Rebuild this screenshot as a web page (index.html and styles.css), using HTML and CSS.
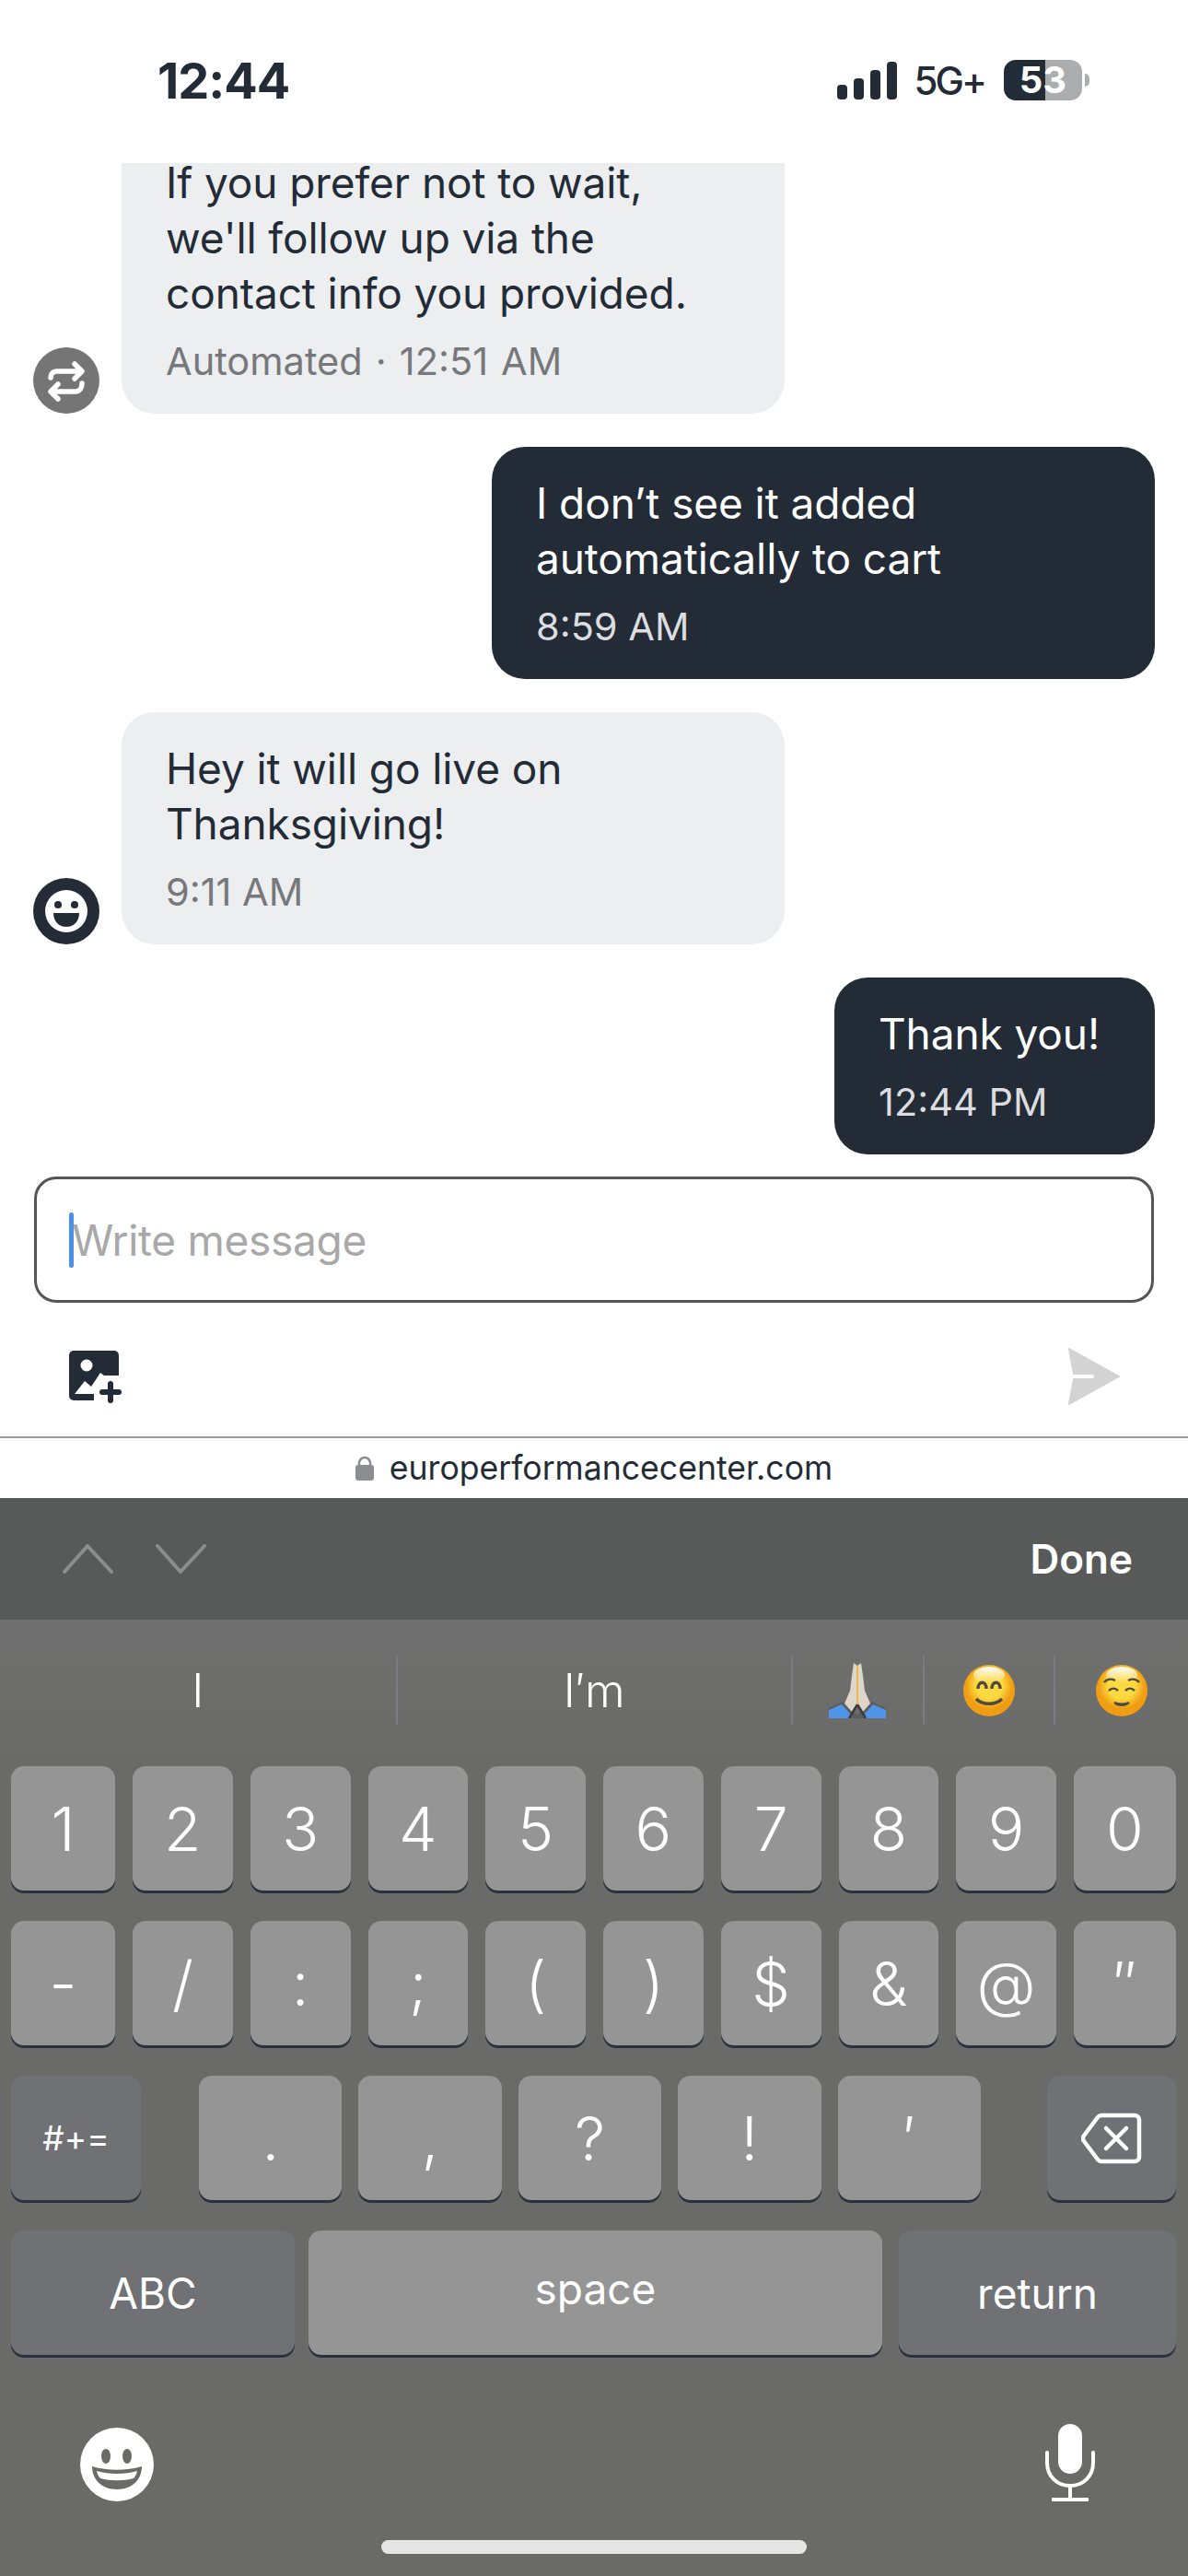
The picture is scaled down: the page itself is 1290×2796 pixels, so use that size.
FILE: index.html
```html
<!DOCTYPE html>
<html lang="en">
<head>
  <meta charset="UTF-8" />
  <meta name="viewport" content="width=device-width, initial-scale=1" />
  <title>Chat</title>
  <link rel="stylesheet" href="styles.css">
</head>
<body>
  <div class="status-bar">
    <span class="clock">12:44</span>
    <div class="status-right">
      <svg class="signal" width="65" height="41" viewBox="0 0 65 41">
        <rect x="0" y="25" width="11" height="16" rx="4" />
        <rect x="18" y="18" width="11" height="23" rx="4" />
        <rect x="36" y="9" width="11" height="32" rx="4" />
        <rect x="54" y="0" width="11" height="41" rx="4" />
      </svg>
      <span class="network">5G+</span>
      <div class="battery">53</div>
      <div class="battery-nub"></div>
    </div>
  </div>

  <div class="chat">
    <div class="row">
      <div class="avatar avatar-auto">
        <svg width="72" height="72" viewBox="0 0 72 72" fill="none" stroke="#fff" stroke-width="5.5" stroke-linecap="round" stroke-linejoin="round">
          <path d="M19 33c0-4 2-7 7-7h26" />
          <path d="M45 18l8 8-8 8" />
          <path d="M53 39c0 4-2 9-7 9H20" />
          <path d="M27 40l-8 8 8 8" />
        </svg>
      </div>
      <div class="bubble">
        <p class="bubble-text">If you prefer not to wait,<br>we'll follow up via the<br>contact info you provided.</p>
        <p class="bubble-meta bubble-meta-auto">Automated · 12:51 AM</p>
      </div>
    </div>

    <div class="row row-own">
      <div class="bubble bubble-own">
        <p class="bubble-text">I don’t see it added<br>automatically to cart</p>
        <p class="bubble-meta">8:59 AM</p>
      </div>
    </div>

    <div class="row">
      <div class="avatar avatar-agent">
        <svg width="72" height="72" viewBox="0 0 72 72">
          <circle cx="36" cy="36" r="23" fill="#fff" />
          <circle cx="27" cy="29" r="4" fill="#232b36" />
          <circle cx="45" cy="29" r="4" fill="#232b36" />
          <path d="M22 38h28c0 9-6 15-14 15s-14-6-14-15z" fill="#232b36" />
        </svg>
      </div>
      <div class="bubble">
        <p class="bubble-text">Hey it will go live on<br>Thanksgiving!</p>
        <p class="bubble-meta">9:11 AM</p>
      </div>
    </div>

    <div class="row row-own">
      <div class="bubble bubble-own bubble-short">
        <p class="bubble-text">Thank you!</p>
        <p class="bubble-meta">12:44 PM</p>
      </div>
    </div>
  </div>

  <div class="composer">
    <span class="caret"></span>
    <span class="placeholder">Write message</span>
  </div>

  <div class="composer-tools">
    <svg width="60" height="60" viewBox="0 0 60 60">
      <rect width="54" height="54" rx="5" fill="#232b36" />
      <path d="M6 47l11-14 7 6 10-15 4 3h16v27H27v-7z" fill="#fff" />
      <circle cx="19" cy="16" r="6.5" fill="#fff" />
      <path d="M36 45h18M45 36v18" stroke="#232b36" stroke-width="6" stroke-linecap="round" />
    </svg>
    <svg width="60" height="62" viewBox="0 0 60 62">
      <path d="M3 1l54 30L3 61l5-27h20a2.500 2.500 0 0 0 0-6H8z" fill="#d3d3d3" stroke="#d3d3d3" stroke-width="2" stroke-linejoin="round" />
    </svg>
  </div>

  <div class="url-bar">
    <svg width="20" height="27" viewBox="0 0 20 27">
      <path d="M4 11V8a6 6 0 0 1 12 0v3" fill="none" stroke="#8c8d90" stroke-width="2.500" />
      <rect y="10" width="20" height="17" rx="3" fill="#8c8d90" />
    </svg>
    <span>europerformancecenter.com</span>
  </div>

  <div class="accessory">
    <div class="accessory-nav">
      <svg width="55" height="32" viewBox="0 0 55 32"><path d="M2 30L27 2l26 28" fill="none" stroke="#8c8d8c" stroke-width="4" stroke-linecap="round" stroke-linejoin="round" /></svg>
      <svg width="55" height="32" viewBox="0 0 55 32"><path d="M2 2l25 28L53 2" fill="none" stroke="#8c8d8c" stroke-width="4" stroke-linecap="round" stroke-linejoin="round" /></svg>
    </div>
    <span class="done">Done</span>
  </div>

  <div class="keyboard">
    <div class="suggestions">
      <div class="suggestion suggestion-word">I</div>
      <div class="suggestion suggestion-word">I′m</div>
      <div class="suggestion suggestion-emoji">
        <svg width="62" height="61" viewBox="0 0 62 61">
          <path d="M0 61V50l15-7 16 14 16-14 15 7v11z" fill="#5c5d60" />
          <path d="M0 61v-9l14-6 11 12-2 3zM62 61v-9l-14-6-11 12 2 3z" fill="#4f95e8" />
          <path d="M27 1l4 3v42l-5 9-9-10 6-14 2-16zM35 1l-4 3v42l5 9 9-10-6-14-2-16z" fill="#ded6c6" />
          <path d="M31 46l-9 15M31 46l9 15" stroke="#3c3c40" stroke-width="2.500" />
          <path d="M31 4v42" stroke="#e8b95a" stroke-width="2" />
        </svg>
      </div>
      <div class="suggestion suggestion-emoji">
        <svg width="56" height="56" viewBox="0 0 56 56">
          <defs>
            <radialGradient id="face" cx="50%" cy="40%" r="58%">
              <stop offset="0.45" stop-color="#fcd93f" />
              <stop offset="0.78" stop-color="#f09d13" />
            </radialGradient>
            <linearGradient id="shine" x1="0" y1="0" x2="0" y2="1">
              <stop offset="0" stop-color="#fff" />
              <stop offset="1" stop-color="#fff" stop-opacity="0" />
            </linearGradient>
          </defs>
          <circle cx="28" cy="28" r="28" fill="url(#face)" />
          <ellipse cx="28" cy="11" rx="17" ry="9" fill="url(#shine)" />
          <path d="M16 26c0-9 9-9 9 0M31 26c0-9 9-9 9 0" fill="none" stroke="#4d4a44" stroke-width="3.500" />
          <path d="M14 37c7 7 21 7 28 0" fill="none" stroke="#4d4a44" stroke-width="3.500" />
        </svg>
      </div>
      <div class="suggestion suggestion-emoji suggestion-last">
        <svg width="56" height="56" viewBox="0 0 56 56">
          <circle cx="28" cy="28" r="28" fill="url(#face)" />
          <ellipse cx="28" cy="11" rx="17" ry="9" fill="url(#shine)" />
          <path d="M9 19c3-4 8-4 12-2M35 17c4-2 9-2 12 2" fill="none" stroke="#4d4a44" stroke-width="2.500" />
          <path d="M14 28c3-3 7-3 10 0M32 28c3-3 7-3 10 0" fill="none" stroke="#4d4a44" stroke-width="2.500" />
          <path d="M20 41c4 4 12 4 16 0-4 2-12 2-16 0z" fill="#4d4a44" stroke="#4d4a44" stroke-width="2" />
        </svg>
      </div>
    </div>

    <div class="keys">
      <div class="key-row">
        <div class="key">1</div><div class="key">2</div><div class="key">3</div><div class="key">4</div><div class="key">5</div>
        <div class="key">6</div><div class="key">7</div><div class="key">8</div><div class="key">9</div><div class="key">0</div>
      </div>
      <div class="key-row">
        <div class="key">-</div><div class="key">/</div><div class="key">:</div><div class="key">;</div><div class="key">(</div>
        <div class="key">)</div><div class="key">$</div><div class="key">&amp;</div><div class="key">@</div><div class="key">″</div>
      </div>
      <div class="key-row">
        <div class="key key-dark key-shift">#+=</div>
        <div class="key-group">
          <div class="key">.</div><div class="key">,</div><div class="key">?</div><div class="key">!</div><div class="key">′</div>
        </div>
        <div class="key key-dark key-delete">
          <svg width="66" height="56" viewBox="0 0 66 56" fill="none" stroke="#fff" stroke-width="4.500" stroke-linecap="round" stroke-linejoin="round">
            <path d="M22 3h36a5 5 0 0 1 5 5v40a5 5 0 0 1-5 5H22a6 6 0 0 1-4-2L3 31a5 5 0 0 1 0-6L18 5a6 6 0 0 1 4-2z" />
            <path d="M27 17l22 22M49 17L27 39" />
          </svg>
        </div>
      </div>
      <div class="key-row key-row-bottom">
        <div class="key key-dark key-abc">ABC</div>
        <div class="key key-space">space</div>
        <div class="key key-dark key-return">return</div>
      </div>
    </div>

    <div class="keyboard-bottom">
      <svg width="80" height="80" viewBox="0 0 80 80">
        <circle cx="40" cy="40" r="40" fill="#fff" />
        <ellipse cx="28" cy="31" rx="5" ry="8" fill="#6a6a68" />
        <ellipse cx="51" cy="31" rx="5" ry="8" fill="#6a6a68" />
        <path d="M13 42c17 5 37 5 54 0 0 14-10 25-27 25S13 56 13 42z" fill="#6a6a68" />
        <path d="M18 47c14 4 30 4 44 0-1 4-2 6-4 8-11 3-25 3-36 0-2-2-3-4-4-8z" fill="#fff" />
      </svg>
      <svg width="56" height="84" viewBox="0 0 56 84">
        <rect x="15" y="0" width="26" height="54" rx="13" fill="#fff" />
        <path d="M3 31v11c0 15 11 25 25 25s25-10 25-25V31" fill="none" stroke="#fff" stroke-width="4" stroke-linecap="round" />
        <path d="M28 67v13" stroke="#fff" stroke-width="4" />
        <rect x="8" y="80" width="40" height="4" rx="1" fill="#fff" />
      </svg>
    </div>

    <div class="home-indicator"></div>
  </div>
</body>
</html>
```

FILE: styles.css
```css
body {
  font-family: Inter, "Noto Sans", sans-serif;
  margin: 0;
  width: 1290px;
  height: 2796px;
  overflow: hidden;
  background: #fff;
  color: #232b36;
}
p {
  margin: 0;
}
svg {
  display: block;
  flex-shrink: 0;
}

/* Status bar */
.status-bar {
  height: 177px;
  box-sizing: border-box;
  padding: 0 107px 3px 171px;
  display: flex;
  justify-content: space-between;
  align-items: center;
}
.clock {
  font-size: 54px;
  font-weight: 700;
  letter-spacing: -1px;
}
.status-right {
  display: flex;
  align-items: center;
}
.signal {
  fill: #232b36;
}
.network {
  font-size: 42px;
  font-weight: 500;
  letter-spacing: -3px;
  margin-left: 19px;
  margin-right: 21px;
}
.battery {
  width: 85px;
  height: 44px;
  border-radius: 13px;
  background: linear-gradient(90deg, #232b36 45px, #acadaf 45px);
  color: #fff;
  font-size: 40px;
  font-weight: 700;
  line-height: 44px;
  text-align: center;
}
.battery-nub {
  width: 5px;
  height: 14px;
  margin-left: 3px;
  border-radius: 0 7px 7px 0;
  background: #acadaf;
}

/* Messages */
.chat {
  height: 1076px;
  overflow: hidden;
  display: flex;
  flex-direction: column;
  justify-content: flex-end;
  gap: 36px;
  padding: 0 36px;
}
.row {
  display: flex;
  align-items: flex-end;
  gap: 24px;
  flex-shrink: 0;
}
.row-own {
  justify-content: flex-end;
}
.avatar {
  width: 72px;
  height: 72px;
  border-radius: 50%;
}
.avatar-auto {
  background: #757575;
}
.avatar-agent {
  background: #232b36;
}
.bubble {
  width: 720px;
  box-sizing: border-box;
  padding: 31px 48px 33px;
  border-radius: 36px;
  background: #edeef0;
}
.bubble-own {
  background: #232b36;
  color: #fff;
}
.bubble-short {
  width: 348px;
}
.bubble-text {
  font-size: 46px;
  line-height: 60px;
  letter-spacing: -0.1px;
}
.bubble-meta {
  margin-top: 20px;
  font-size: 41.500px;
  line-height: 48px;
  color: #76787b;
}
.bubble-meta-auto {
  word-spacing: 2.400px;
}
.bubble-own .bubble-meta {
  color: #dcdddf;
}

/* Composer */
.composer {
  margin: 24px 37px 0;
  height: 137px;
  box-sizing: border-box;
  border: 3px solid #555;
  border-radius: 24px;
  padding-left: 35px;
  display: flex;
  align-items: center;
}
.caret {
  width: 5px;
  height: 60px;
  border-radius: 3px;
  background: #4a8fe8;
  margin-right: -2px;
}
.placeholder {
  font-size: 46px;
  letter-spacing: -0.3px;
  color: #a8a8a8;
}
.composer-tools {
  height: 145px;
  box-sizing: border-box;
  padding: 49px 72px 0 75px;
  display: flex;
  justify-content: space-between;
  align-items: flex-start;
}
.composer-tools svg:first-child {
  margin-top: 3px;
}

/* Browser url bar */
.url-bar {
  height: 67px;
  box-sizing: border-box;
  border-top: 2px solid #999;
  display: flex;
  justify-content: center;
  align-items: center;
  gap: 17px;
  font-size: 35.600px;
}
.accessory {
  height: 132px;
  box-sizing: border-box;
  padding: 0 60px 0 68px;
  background: #585a59;
  display: flex;
  justify-content: space-between;
  align-items: center;
}
.accessory-nav {
  display: flex;
  gap: 46px;
}
.done {
  font-size: 44px;
  font-weight: 600;
  color: #fff;
}

/* Keyboard */
.keyboard {
  height: 1038px;
  background: linear-gradient(180deg, #707070, #6a6a68 160px);
  color: #fff;
}
.suggestions {
  height: 159px;
  box-sizing: border-box;
  padding-top: 39px;
  display: flex;
  align-items: flex-start;
}
.suggestion {
  height: 75px;
  display: flex;
  justify-content: center;
  align-items: center;
  border-left: 2px solid #7b7c81;
  box-sizing: border-box;
}
.suggestion:first-child {
  border-left: none;
}
.suggestion-word {
  width: 429.500px;
  font-size: 50px;
  font-weight: 300;
}
.suggestion-emoji {
  width: 142.500px;
}
.suggestion-last {
  flex: 1;
}
.keys {
  display: flex;
  flex-direction: column;
  gap: 33px;
  padding: 0 13px 0 12px;
}
.key-row {
  display: flex;
  gap: 19px;
}
.key {
  flex: 0 0 108.750px;
  height: 135px;
  border-radius: 14px;
  background: #959595;
  box-shadow: 0 3px 0 #2c3140;
  display: flex;
  justify-content: center;
  align-items: center;
  font-size: 66px;
  font-weight: 300;
}
.key-row > .key:first-child {
  flex-basis: 113px;
}
.key-row > .key:last-child {
  flex-basis: 111px;
}
.key-dark {
  background: #707174;
}
.key-row .key.key-shift {
  flex-basis: 141px;
  font-size: 37px;
  font-weight: 400;
}
.key-group {
  flex: 1;
  display: flex;
  gap: 18px;
  margin: 0 53px 0 44px;
}
.key-group .key.key {
  flex: 1 1 0;
}
.key-row .key.key-delete {
  flex-basis: 140px;
}
.key-row-bottom {
  gap: 18px;
}
.key-row .key.key-abc {
  flex-basis: 308px;
  font-size: 46px;
  font-weight: 400;
}
.key-space {
  flex: 1 1 0;
  margin-left: -3px;
  font-size: 46px;
  font-weight: 400;
  padding-bottom: 10px;
  box-sizing: border-box;
}
.key-row .key.key-return {
  flex-basis: 301px;
  font-size: 46px;
  font-weight: 400;
}
.keyboard-bottom {
  display: flex;
  justify-content: space-between;
  align-items: flex-end;
  padding: 75px 100px 0 87px;
}
.home-indicator {
  width: 462px;
  height: 15px;
  margin: 42px auto 0;
  border-radius: 8px;
  background: #e5e5e5;
}
```
